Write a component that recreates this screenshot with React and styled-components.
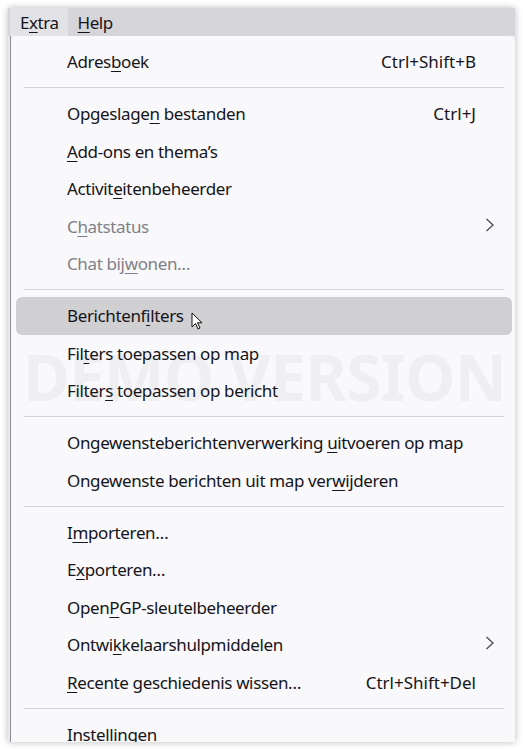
import React from 'react';
import styled, {createGlobalStyle} from 'styled-components';

const Global = createGlobalStyle`
    body {
        margin: 0;
        background: #fff;
        font-family: "Noto Sans", "Open Sans", sans-serif;
        color: #15141a;
    }
`;

const Page = styled.div`
    width: 523px;
    height: 749px;
    padding: 8px 8px 7px 8px;
    box-sizing: border-box;
`;

const Frame = styled.div`
    width: 507px;
    height: 734px;
    display: flex;
    flex-direction: column;
    overflow: hidden;
    box-shadow: 0 0 7px rgba(0, 0, 0, 0.28);
    background: #f2f2f4;
`;

const MenuBar = styled.div`
    height: 28px;
    flex: none;
    display: flex;
    align-items: stretch;
    background: #d6d6da;
    padding-left: 2px;
`;

const BarItem = styled.div`
    display: flex;
    align-items: center;
    padding: 0 9px 0 10px;
    font-size: 17px;
    letter-spacing: -0.45px;
    background: ${p => (p.active ? '#e3e3e7' : 'transparent')};
`;

const Body = styled.div`
    flex: 1;
    display: flex;
    min-height: 0;
`;

const Strip = styled.div`
    width: 2px;
    flex: none;
    background: #e9e9eb;
    border-right: 1px solid #8c8c94;
`;

const Popup = styled.div`
    position: relative;
    flex: 1;
    background: #f9f9fb;
    border-radius: 8px 8px 0 0;
    padding-top: 7px;
    overflow: hidden;
`;

const Item = styled.div`
    position: relative;
    height: 37.5px;
    margin: 0 3px 0 5px;
    padding: 0 14px 0 51px;
    display: grid;
    grid-template-columns: 1fr auto 22px;
    align-items: center;
    font-size: 17px;
    letter-spacing: -0.37px;
    border-radius: 6px;
    color: ${p => (p.disabled ? '#808089' : '#15141a')};
    background: ${p => (p.hover ? '#d0d0d2' : 'transparent')};
    white-space: nowrap;
`;

const Key = styled.u`
    text-decoration-thickness: 1px;
    text-underline-offset: 3px;
`;

const Shortcut = styled.span`
    text-align: right;
    letter-spacing: 0;
`;

const Arrow = styled.svg`
    justify-self: end;
    margin-right: 3px;
    margin-top: -3px;
`;

const Separator = styled.div`
    height: 14.5px;
    display: flex;
    align-items: center;
    padding: 0 11px 0 13px;
    &::after {
        content: '';
        flex: 1;
        height: 1px;
        background: #d4d4d8;
    }
`;

const Watermark = styled.div`
    position: absolute;
    left: 12px;
    top: 297px;
    font-size: 64px;
    font-weight: 700;
    letter-spacing: -0.8px;
    color: rgba(0, 0, 0, 0.04);
    pointer-events: none;
    white-space: nowrap;
`;

const Cursor = styled.svg`
    position: absolute;
    left: 175px;
    top: 15px;
`;

const Label = ({text, k}) => {
    if (k === undefined) return <span>{text}</span>;
    return (
        <span>
            {text.slice(0, k)}
            <Key>{text[k]}</Key>
            {text.slice(k + 1)}
        </span>
    );
};

const chevron = (
    <Arrow width="10" height="14" viewBox="0 0 10 14">
        <path d="M1.5 1 L8 7 L1.5 13" fill="none" stroke="#4a4a50" strokeWidth="1.3" />
    </Arrow>
);

const menu = [
    [{text: 'Adresboek', k: 5, sc: 'Ctrl+Shift+B'}],
    [
        {text: 'Opgeslagen bestanden', k: 9, sc: 'Ctrl+J'},
        {text: 'Add-ons en thema’s', k: 0},
        {text: 'Activiteitenbeheerder', k: 7},
        {text: 'Chatstatus', k: 1, disabled: true, sub: true},
        {text: 'Chat bijwonen…', k: 8, disabled: true},
    ],
    [
        {text: 'Berichtenfilters', k: 10, hover: true},
        {text: 'Filters toepassen op map', k: 3},
        {text: 'Filters toepassen op bericht', k: 6},
    ],
    [
        {text: 'Ongewensteberichtenverwerking uitvoeren op map', k: 30},
        {text: 'Ongewenste berichten uit map verwijderen', k: 32},
    ],
    [
        {text: 'Importeren…', k: 1},
        {text: 'Exporteren…', k: 1},
        {text: 'OpenPGP-sleutelbeheerder', k: 4},
        {text: 'Ontwikkelaarshulpmiddelen', k: 5, sub: true},
        {text: 'Recente geschiedenis wissen…', k: 0, sc: 'Ctrl+Shift+Del'},
    ],
    [{text: 'Instellingen'}],
];

export default function App() {
    return (
        <Page>
            <Global />
            <Frame>
                <MenuBar>
                    <BarItem active>
                        <Label text="Extra" k={1} />
                    </BarItem>
                    <BarItem>
                        <Label text="Help" k={0} />
                    </BarItem>
                </MenuBar>
                <Body>
                    <Strip />
                    <Popup>
                        <Watermark>DEMO VERSION</Watermark>
                        {menu.map((group, gi) => (
                            <React.Fragment key={gi}>
                                {gi > 0 && <Separator />}
                                {group.map(item => (
                                    <Item key={item.text} disabled={item.disabled} hover={item.hover}>
                                        <Label text={item.text} k={item.k} />
                                        <Shortcut>{item.sc}</Shortcut>
                                        {item.sub ? chevron : <span />}
                                        {item.hover && (
                                            <Cursor width="12" height="19" viewBox="0 0 12 19">
                                                <path
                                                    d="M1 1 L1 15 L4.5 11.5 L7 17 L9 16 L6.5 10.8 L11 10.8 Z"
                                                    fill="#fff"
                                                    stroke="#111"
                                                    strokeWidth="1"
                                                />
                                            </Cursor>
                                        )}
                                    </Item>
                                ))}
                            </React.Fragment>
                        ))}
                    </Popup>
                </Body>
            </Frame>
        </Page>
    );
}
